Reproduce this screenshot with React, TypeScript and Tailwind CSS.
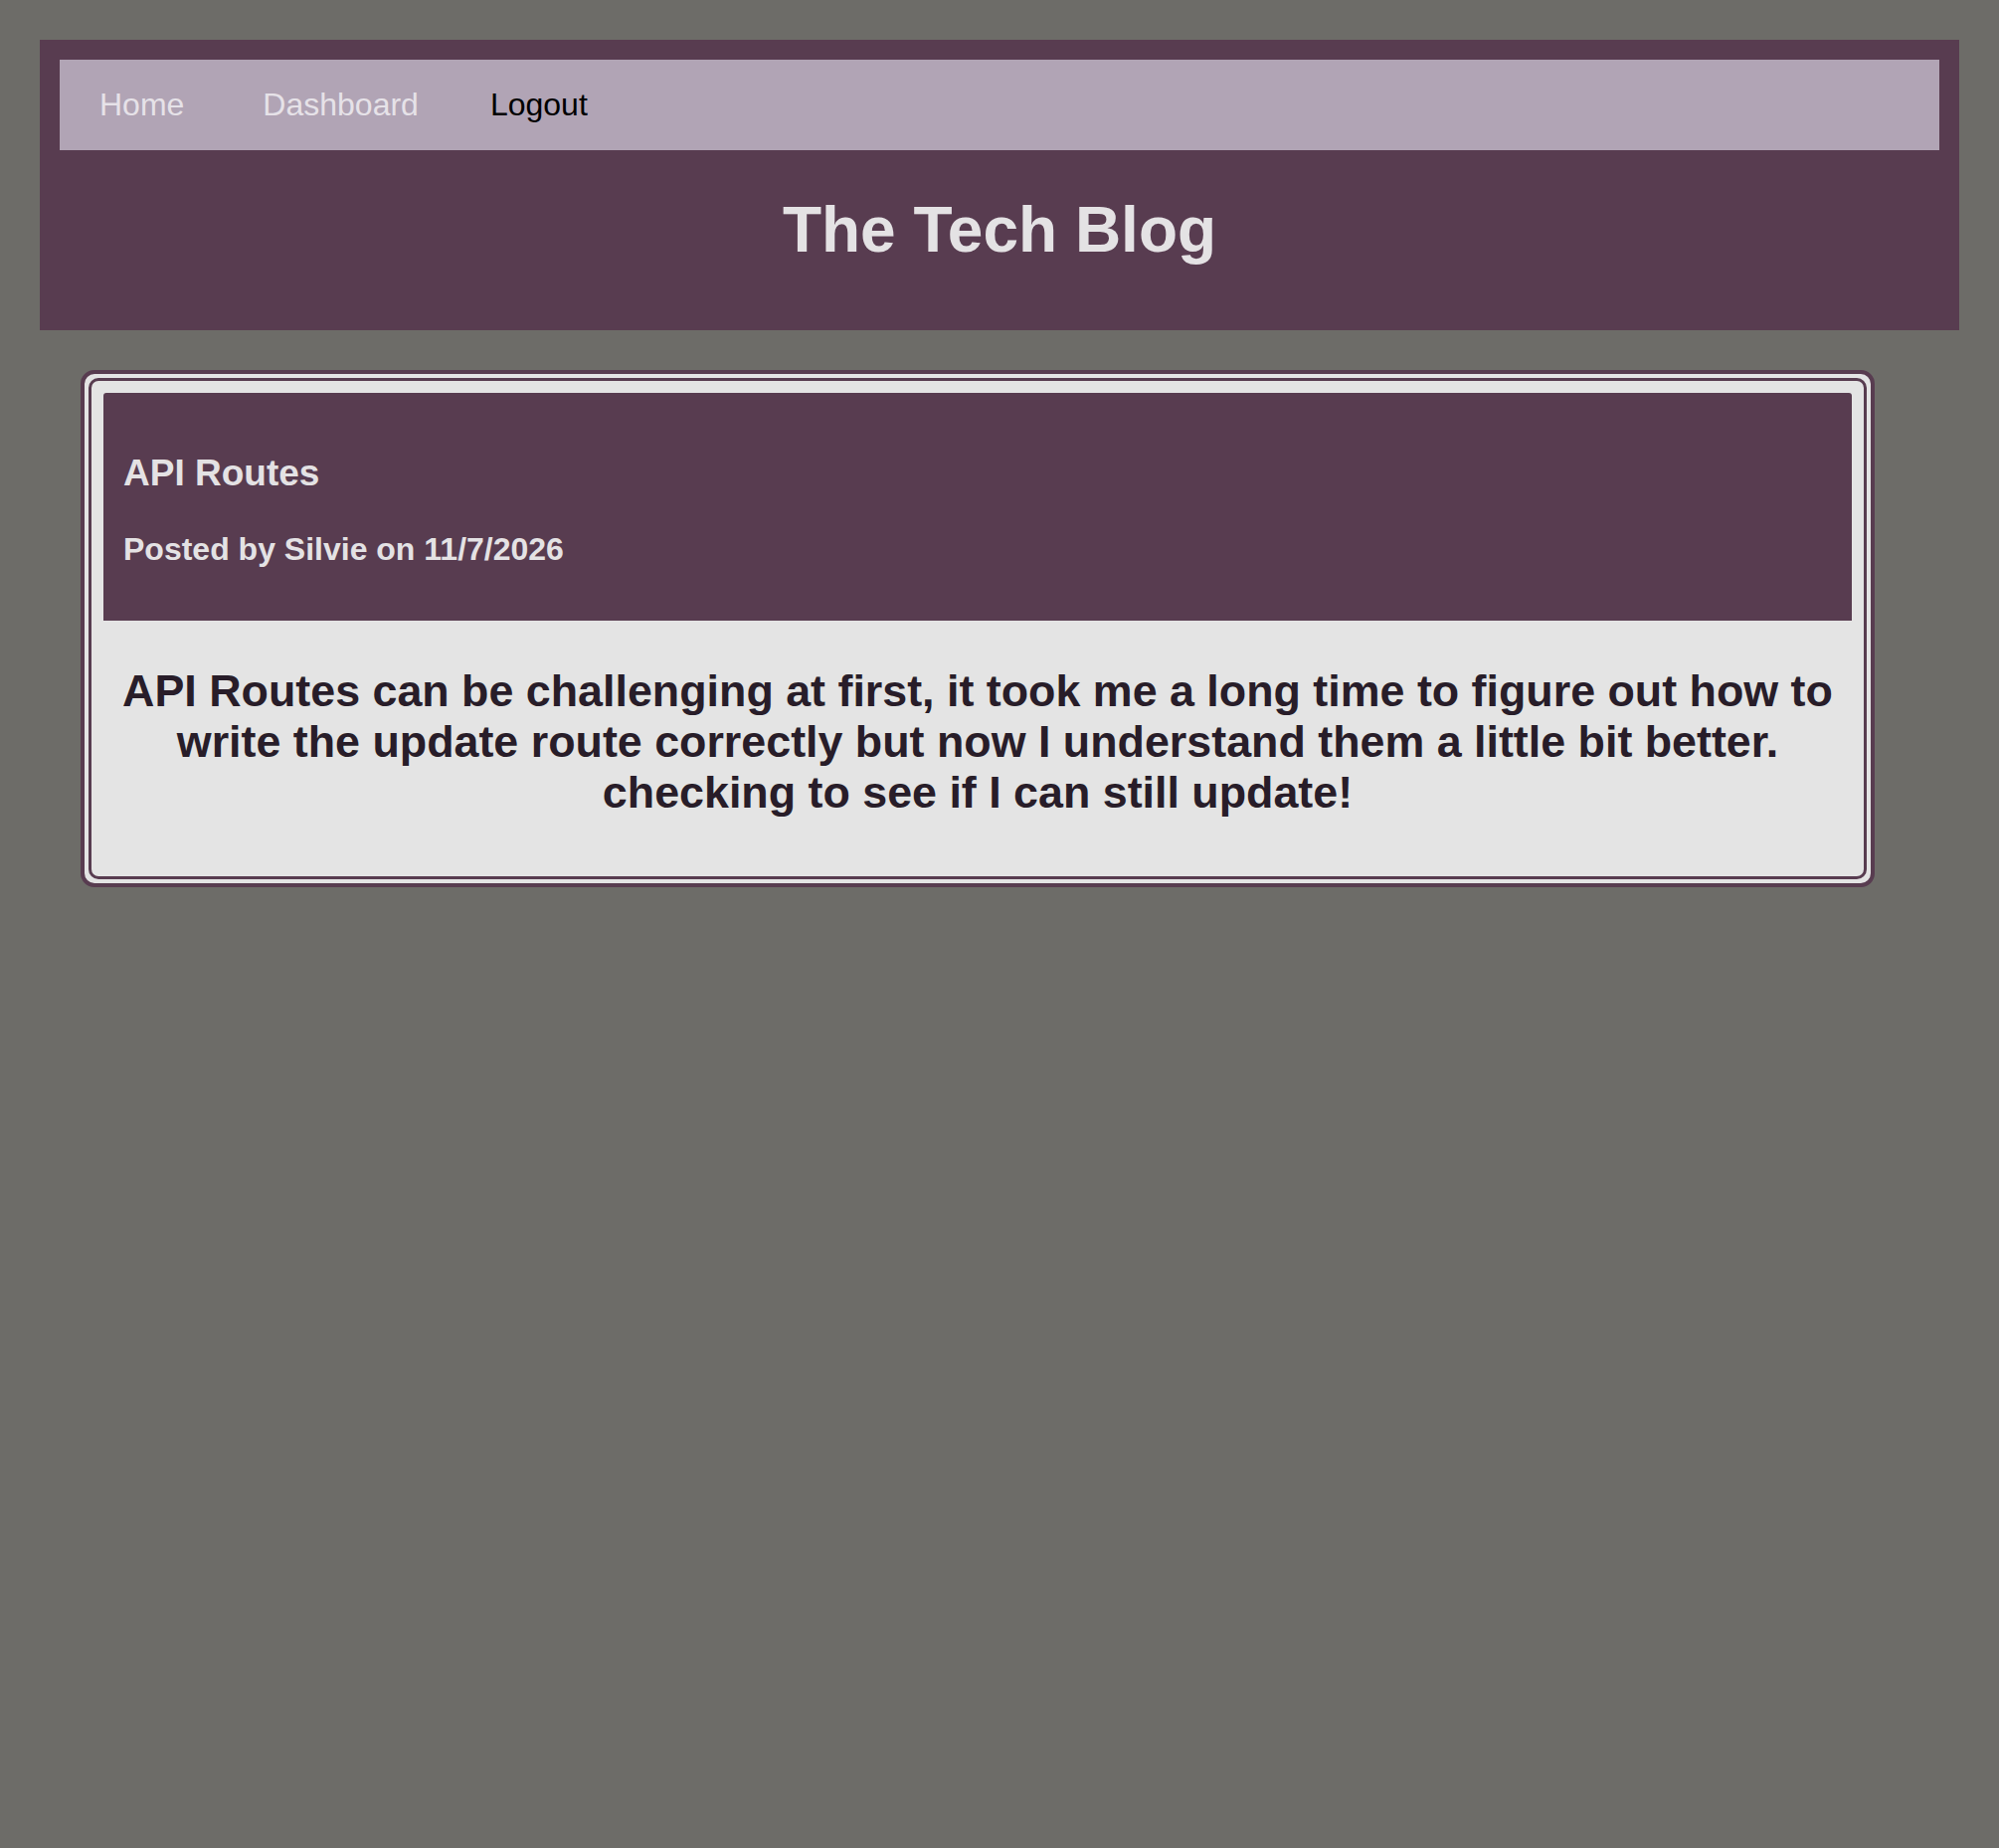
import React from "react";

export default function App() {
  return (
    <div className="min-h-screen bg-[#6d6c68] pt-[40px] pb-[40px] font-['Liberation_Sans',Arial,sans-serif]">
      <header className="mx-[40px] bg-[#583c50] px-[20px] pt-[20px] pb-[21px]">
        <nav className="flex h-[91px] items-center bg-[#b1a4b5] pl-[40px] text-[32px] leading-[normal]">
          <a className="text-[#e6e2e8]">Home</a>
          <a className="ml-[79px] text-[#e6e2e8]">Dashboard</a>
          <a className="ml-[72px] text-black">Logout</a>
        </nav>
        <h1 className="my-[43px] text-center text-[64px] font-bold leading-[normal] text-[#e4e2e4]">
          The Tech Blog
        </h1>
      </header>

      <div className="ml-[81px] mt-[40px] w-[1804px] rounded-[14px] border-4 border-[#583c50] bg-[#e4e4e4] p-[4px]">
        <div className="rounded-[10px] border-[3px] border-[#583c50] bg-[#e4e4e4] p-[12px]">
          <div className="rounded-t-[3px] bg-[#583c50] px-[20px] pt-[60px] pb-[53px] text-[#e4e2e4]">
            <h2 className="text-[37px] font-bold leading-[normal]">API Routes</h2>
            <p className="mt-[37px] text-[32px] font-bold leading-[normal]">
              Posted by Silvie on 11/7/2026
            </p>
          </div>
          <p className="mt-[45px] mb-[47px] text-center text-[44.8px] font-bold leading-[normal] text-[#281d29]">
            API Routes can be challenging at first, it took me a long time to figure out how to write the
            update route correctly but now I understand them a little bit better. checking to see if I can
            still update!
          </p>
        </div>
      </div>
    </div>
  );
}
